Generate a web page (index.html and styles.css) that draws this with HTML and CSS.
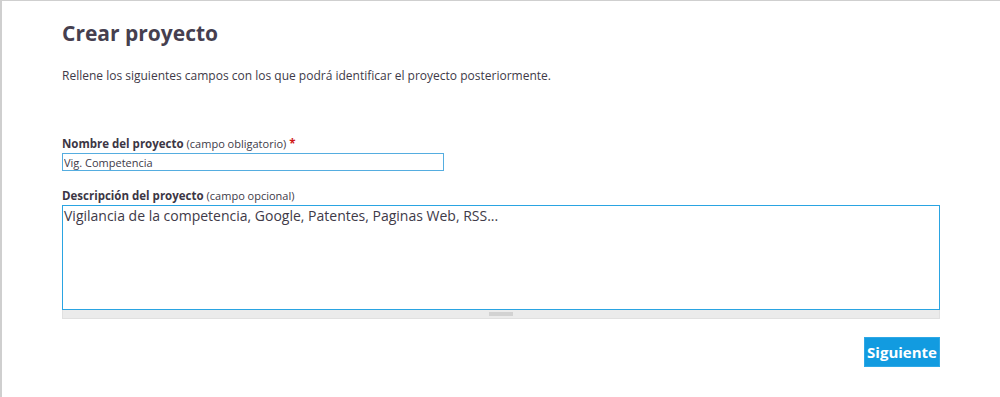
FILE: index.html
```html
<!DOCTYPE html>
<html lang="es">
<head>
    <meta charset="UTF-8">
    <title>Crear proyecto</title>
    <link rel="stylesheet" href="styles.css">
</head>
<body>
    <div class="page">
        <div class="content">
            <h1 class="title">Crear proyecto</h1>
            <p class="intro">Rellene los siguientes campos con los que podrá identificar el proyecto posteriormente.</p>

            <!-- nombre -->
            <div class="field">
                <label class="label" for="nombre"><b>Nombre del proyecto</b> <span class="hint">(campo obligatorio)</span> <span class="req">*</span></label>
                <input class="input" id="nombre" type="text" value="Vig. Competencia">
            </div>

            <!-- descripcion -->
            <div class="field">
                <label class="label" for="desc"><b>Descripción del proyecto</b> <span class="hint">(campo opcional)</span></label>
                <textarea class="textarea" id="desc">Vigilancia de la competencia, Google, Patentes, Paginas Web, RSS...</textarea>
                <div class="grip"><em class="grip-handle"></em></div>
            </div>

            <div class="actions">
                <button class="btn" type="button">Siguiente</button>
            </div>
        </div>
    </div>
</body>
</html>
```

FILE: styles.css
```css
*{
    margin: 0;
    padding: 0;
    box-sizing: border-box;
}
html, body{
    height: 100%;
    background: #fff;
}
.page{
    height: 100%;
    border-top: 1px solid #cfcfcf;
    border-left: 2px solid #cfcfcf;
    font-family: "Open Sans", sans-serif;
    color: #403a48;
}
.content{
    width: 878px;
    margin-left: 60px;
    padding-top: 17px;
}
.title{
    font-size: 21px;
    font-weight: bold;
    color: #463f4f;
    line-height: 30px;
}
.intro{
    margin-top: 20px;
    font-size: 12px;
    line-height: 16px;
}
.field{
    display: flex;
    flex-direction: column;
    align-items: flex-start;
}
.field:first-of-type{
    margin-top: 52px;
}
.field + .field{
    margin-top: 17px;
}
.label{
    font-size: 11.5px;
    line-height: 16px;
    margin-bottom: 1px;
}
.label b{
    color: #3c3644;
}
.hint{
    font-size: 11px;
}
.req{
    color: #d01818;
    font-weight: bold;
}
.input{
    width: 382px;
    height: 18px;
    border: 1px solid #55ade0;
    font-family: "Open Sans", sans-serif;
    font-size: 11px;
    color: #403a48;
    padding: 0 1px;
    outline: none;
}
.textarea{
    width: 878px;
    height: 105px;
    border: 1px solid #2aa4e2;
    font-family: "Open Sans", sans-serif;
    font-size: 14px;
    color: #403a48;
    padding: 0 1px;
    resize: none;
    outline: none;
}
.grip{
    width: 878px;
    height: 9px;
    background: #ebebeb;
    border: 1px solid #e0e0e0;
    border-top: none;
    display: flex;
    justify-content: center;
    align-items: center;
}
.grip-handle{
    display: block;
    width: 24px;
    height: 4px;
    background: #d2d2d2;
}
.actions{
    display: flex;
    justify-content: flex-end;
    margin-top: 18px;
}
.btn{
    background: #129be0;
    border: 1px solid #2ea8e6;
    color: #fff;
    font-family: "Open Sans", sans-serif;
    font-weight: bold;
    font-size: 15px;
    width: 76px;
    height: 30px;
    cursor: pointer;
}
```
